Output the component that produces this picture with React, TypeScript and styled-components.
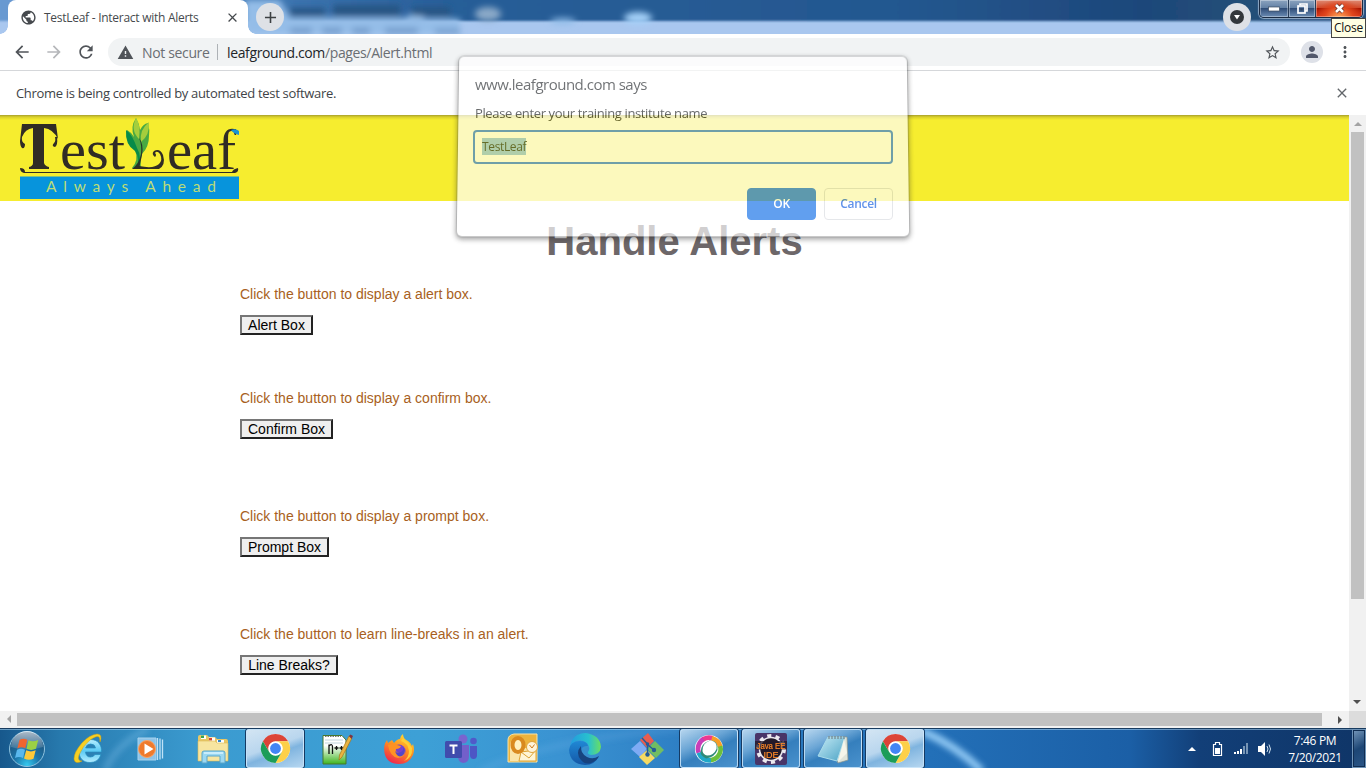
import React from 'react';
import styled, { createGlobalStyle } from 'styled-components';
import {
  MdAdd, MdArrowBack, MdArrowForward, MdClose, MdMoreVert, MdPerson,
  MdPublic, MdRefresh, MdStarBorder, MdWarning,
} from 'react-icons/md';

const ui = `'Open Sans', 'Noto Sans', sans-serif`;
const web = `'Liberation Sans', Arial, sans-serif`;

const GlobalStyle = createGlobalStyle`
  * { box-sizing: border-box; }
  body { margin: 0; overflow: hidden; background: #fff; }
  button, input { font: inherit; }
`;

const Desktop = styled.div`
  position: relative;
  width: 1366px;
  height: 768px;
  display: flex;
  flex-direction: column;
  overflow: hidden;
  font-family: ${ui};
  white-space: nowrap;
`;

/* ---------- title bar ---------- */
const TitleBar = styled.header`
  position: relative;
  height: 34px;
  flex: none;
  display: flex;
  align-items: flex-start;
  padding-left: 8px;
  background: #a9c7ef;
`;
const Glass = styled.svg`
  position: absolute;
  inset: 0;
`;
const Tab = styled.div`
  position: relative;
  width: 240px;
  height: 34px;
  display: flex;
  align-items: center;
  padding: 0 8px 0 12px;
  background: #fff;
  border-radius: 8px 8px 0 0;
  color: #45494d;
  &::before, &::after {
    content: '';
    position: absolute;
    bottom: 0;
    width: 8px;
    height: 8px;
  }
  &::before { left: -8px; background: radial-gradient(circle at 0 0, transparent 7.5px, #fff 8px); }
  &::after { right: -8px; background: radial-gradient(circle at 100% 0, transparent 7.5px, #fff 8px); }
`;
const TabTitle = styled.span`
  flex: 1;
  margin-left: 7px;
  font-size: 12px;
  letter-spacing: -0.27px;
`;
const RoundButton = styled.div`
  position: relative;
  width: 28px;
  height: 28px;
  margin: 3px 0 0 8px;
  border-radius: 50%;
  display: grid;
  place-items: center;
  background: #dee1e6;
  color: #3c4043;
`;
const Spacer = styled.div`
  flex: 1;
`;
const WindowControls = styled.div`
  position: relative;
  display: flex;
  width: 104px;
  height: 18px;
  margin: 0 3px 0 8px;
  border: 1px solid #1b2c44;
  border-top: 0;
  border-radius: 0 0 5px 5px;
  box-shadow: 0 0 1px 1px rgba(220, 235, 250, 0.6);
  overflow: hidden;
`;
const Control = styled.div<{ $w: number; $close?: boolean }>`
  width: ${p => p.$w}px;
  display: grid;
  place-items: center;
  border-right: ${p => (p.$close ? 'none' : '1px solid #263c58')};
  box-shadow: inset 0 0 0 1px rgba(255, 255, 255, 0.35);
  background: ${p => p.$close
    ? 'radial-gradient(ellipse at 50% 110%, #ffb060 0, #e0441c 45%, transparent 75%), linear-gradient(#e08a72 0, #cf4a2c 45%, #a81500 50%, #d8361a)'
    : 'linear-gradient(#8ba3bf 0, #6482a6 45%, #304e78 50%, #6c8db5)'};
`;
const Tooltip = styled.div`
  position: absolute;
  z-index: 5;
  top: 18px;
  right: 0;
  width: 35px;
  height: 20px;
  border: 1px solid #444;
  background: #ffffe3;
  color: #111;
  font-size: 12px;
  line-height: 18px;
  text-align: center;
  letter-spacing: -0.25px;
`;

/* ---------- toolbar ---------- */
const Toolbar = styled.div`
  height: 37px;
  flex: none;
  display: flex;
  align-items: center;
  padding: 0 12px;
  border-bottom: 1px solid #d5d7da;
  color: #505459;
`;
const NavIcons = styled.div`
  display: flex;
  gap: 12px;
  width: 96px;
`;
const AddressBar = styled.div`
  flex: 1;
  height: 28px;
  display: flex;
  align-items: center;
  padding: 0 9px 0 9px;
  border-radius: 14px;
  background: #f1f3f4;
  color: #6a6e73;
  font-size: 14px;
`;
const SecurityNote = styled.span`
  width: 75px;
  margin-left: 8px;
  letter-spacing: -0.35px;
`;
const Divider = styled.i`
  width: 1px;
  height: 16px;
  margin-right: 9px;
  background: #aeb2b6;
`;
const Address = styled.span`
  flex: 1;
  letter-spacing: -0.37px;
  b { font-weight: 400; color: #222529; }
`;
const Avatar = styled.div`
  width: 22px;
  height: 22px;
  margin: 0 13px 0 11px;
  border-radius: 50%;
  display: grid;
  place-items: center;
  background: #dee1e8;
  color: #52586b;
`;
const InfoBar = styled.div`
  height: 44px;
  flex: none;
  display: flex;
  align-items: center;
  justify-content: space-between;
  padding: 0 16px;
  color: #404347;
  font-size: 13px;
  letter-spacing: -0.32px;
`;

/* ---------- web page ---------- */
const Viewport = styled.div`
  height: 596px;
  flex: none;
  display: flex;
`;
const Page = styled.main`
  width: 1349px;
  font-family: ${web};
  overflow: hidden;
`;
const Banner = styled.div`
  height: 86px;
  padding-left: 20px;
  background: linear-gradient(#a79f2c 0, #d9d02b 2px, #f6ed2f 5px);
`;
const Heading = styled.h1`
  height: 48px;
  margin: 16px 0 20px;
  text-align: center;
  font-size: 40px;
  line-height: 49px;
  color: #6d6769;
`;
const Demo = styled.section<{ $height: number }>`
  height: ${p => p.$height}px;
  margin-left: 240px;
  font-size: 14px;
  color: #a85f22;
  p { margin: 0 0 12px; line-height: 18px; }
`;
const DemoButton = styled.button<{ $w: number }>`
  display: block;
  width: ${p => p.$w}px;
  height: 20px;
  padding: 0;
  border: 2px solid;
  border-color: #767676 #222 #222 #767676;
  background: #efefef;
  color: #000;
  font-size: 14px;
  line-height: 16px;
`;
const VerticalScroll = styled.div`
  width: 17px;
  display: flex;
  flex-direction: column;
  align-items: center;
  background: #f1f1f1;
`;
const HorizontalScroll = styled.div`
  height: 17px;
  flex: none;
  display: flex;
  align-items: center;
  background: #f1f1f1;
`;
const Thumb = styled.div<{ $w: number; $h: number }>`
  width: ${p => p.$w}px;
  height: ${p => p.$h}px;
  background: #c1c1c1;
`;
const Arrow = styled.div<{ $turn: number; $dim?: boolean }>`
  width: 17px;
  height: 17px;
  display: grid;
  place-items: center;
  transform: rotate(${p => p.$turn}deg);
  &::after {
    content: '';
    border: 4px solid transparent;
    border-top: 0;
    border-bottom-color: ${p => (p.$dim ? '#a3a3a3' : '#505050')};
  }
`;
const Corner = styled.div`
  width: 17px;
  height: 17px;
  background: #dcdcdc;
`;

/* ---------- prompt dialog ---------- */
const Dialog = styled.div`
  position: absolute;
  z-index: 3;
  left: 457px;
  top: 56px;
  width: 452px;
  height: 181px;
  padding: 18px 16px 16px 18px;
  opacity: 0.69;
  &::before {
    content: '';
    position: absolute;
    z-index: -1;
    inset: 0 1px 1px;
    border-radius: 5px;
    background: #fff;
    box-shadow: 0 0 0 1px rgba(60, 64, 67, 0.3), 0 2px 5px 1px rgba(40, 40, 40, 0.6);
    transform: perspective(710px) rotateX(2.5deg);
  }
`;
const DialogTitle = styled.div`
  height: 20px;
  font-size: 15px;
  line-height: 20px;
  letter-spacing: -0.5px;
  color: #303438;
`;
const DialogMessage = styled.div`
  height: 18px;
  margin-top: 10px;
  font-size: 13px;
  line-height: 18px;
  letter-spacing: -0.37px;
  color: #25282b;
`;
const Field = styled.div`
  width: 420px;
  height: 34px;
  margin: 8px 0 0 -2px;
  padding: 6px 7px;
  border: 2px solid #327de0;
  border-radius: 4px;
  font-size: 12px;
  line-height: 17px;
  letter-spacing: -0.35px;
  color: #253427;
  span { display: inline-block; height: 17px; background: #91c1e3; }
`;
const Actions = styled.div`
  display: flex;
  justify-content: flex-end;
  gap: 8px;
  margin-top: 24px;
`;
const DialogButton = styled.div<{ $primary?: boolean }>`
  width: 69px;
  height: 32px;
  border-radius: 4px;
  border: 1px solid ${p => (p.$primary ? '#1a73e8' : '#dadce0')};
  background: ${p => (p.$primary ? '#1a73e8' : 'transparent')};
  color: ${p => (p.$primary ? '#fff' : '#1a62e0')};
  font-size: 12px;
  font-weight: 600;
  line-height: 30px;
  text-align: center;
  letter-spacing: -0.3px;
`;

/* ---------- taskbar ---------- */
const TaskBar = styled.footer`
  position: relative;
  height: 40px;
  flex: none;
  display: flex;
  align-items: center;
  overflow: hidden;
  border-top: 1px solid #183b5f;
  background: linear-gradient(90deg, #17588c 0, #2779ad 60px, #3b9bd0 200px, #3da0d6 420px, #3a93d2 560px, #2c7cc2 700px, #2370b8 930px, #1b5fa6 1130px, #123f78 1200px, #0f3567 1366px);
  box-shadow: inset 0 1px 0 rgba(190, 225, 250, 0.5);
`;
const Streaks = styled.svg`
  position: absolute;
  left: 0;
  top: 0;
`;
const Slots = styled.div`
  position: relative;
  display: flex;
  gap: 4px;
`;
const StartButton = styled.div`
  width: 54px;
  margin-right: 2px;
  display: grid;
  place-items: center;
`;
const Slot = styled.div<{ $state?: 'open' | 'active' }>`
  width: 58px;
  height: 39px;
  display: grid;
  place-items: center;
  border-radius: 3px;
  ${p => p.$state && `
    border: 1px solid rgba(205, 230, 250, 0.85);
    box-shadow: 0 0 0 1px #153a63;
    background: ${p.$state === 'active'
      ? 'linear-gradient(160deg, #d3e5f3 0, #b9d6ee 45%, #7fb4df 60%, #b5d6f0)'
      : 'linear-gradient(155deg, #b5d5ee 0, #6aa5d5 35%, #357fbd 55%, #4a92cd)'};
  `}
`;
const Tray = styled.div`
  position: relative;
  display: flex;
  align-items: center;
  color: #fff;
`;
const Clock = styled.div`
  width: 72px;
  margin: 0 1px 0 0;
  font-size: 12px;
  line-height: 17px;
  letter-spacing: -0.35px;
  text-align: center;
`;
const ShowDesktop = styled.div`
  width: 14px;
  height: 39px;
  border: 1px solid #6f94b8;
  box-shadow: inset 0 0 0 1px #102d52;
  background: linear-gradient(150deg, #7597ba, #1d4675 50%, #2b5687);
`;
const IconSvg = styled.svg`
  overflow: visible;
`;

const Icon = ({ size = 32, box = 32, children }: { size?: number; box?: number; children: React.ReactNode }) => (
  <IconSvg width={size} height={size} viewBox={`0 0 ${box} ${box}`}>{children}</IconSvg>
);

const ChromeIcon = () => (
  <Icon size={31}>
    <circle cx="16" cy="16" r="15" fill="#fff" />
    <path d="M3 8.5A15 15 0 0 1 29 8.5H16A7.5 7.5 0 0 0 9.5 19.7Z" fill="#dc4437" />
    <path d="M29 8.5A15 15 0 0 1 16 31L22.5 19.7A7.5 7.5 0 0 0 16 8.5Z" fill="#fdd049" />
    <path d="M3 8.5A15 15 0 0 0 16 31L22.5 19.7A7.5 7.5 0 0 1 9.5 19.7Z" fill="#1c9d58" />
    <circle cx="16" cy="16" r="7" fill="#fff" />
    <circle cx="16" cy="16" r="5.6" fill="#4385f4" />
  </Icon>
);

const StartIcon = () => (
  <Icon size={38} box={38}>
    <defs>
      <radialGradient id="orb" cx=".5" cy=".95" r=".9">
        <stop offset="0" stopColor="#35c8ee" /><stop offset=".4" stopColor="#1b76aa" /><stop offset="1" stopColor="#204a70" />
      </radialGradient>
      <linearGradient id="orbShine" x2="0" y2="1">
        <stop offset="0" stopColor="#fff" stopOpacity=".65" /><stop offset="1" stopColor="#fff" stopOpacity=".1" />
      </linearGradient>
    </defs>
    <circle cx="19" cy="19" r="17.5" fill="url(#orb)" stroke="#8fc3df" />
    <path d="M3 17A16 16 0 0 1 35 17Q19 22 3 17Z" fill="url(#orbShine)" />
    <path d="M11.5 10Q15 7.500 19.300 9.700L17.300 18.300Q13.400 16.300 9.300 18.400Z" fill="#ef6530" />
    <path d="M20.500 10.300Q25 12.500 30.200 10L28 18.800Q23 21 18.500 18.800Z" fill="#9bd044" />
    <path d="M9 19.800Q13 17.800 17 19.800L15 28Q11 26 7 28Z" fill="#5ab8ed" />
    <path d="M18.200 20.300Q23 22.500 27.700 20.300L25.500 28.700Q21 31 16 28.600Z" fill="#fdc93a" />
  </Icon>
);

const ExplorerEIcon = () => (
  <Icon>
    <defs><linearGradient id="ie" x2="0" y2="1"><stop offset="0" stopColor="#b8efff" /><stop offset=".5" stopColor="#5acaf5" /><stop offset="1" stopColor="#b4edff" /></linearGradient></defs>
    <path d="M28.500 19H12.500Q13 24 17.500 24Q20.500 24 22 21.500H28Q25.500 29.500 17 29.500C9.500 29.500 6 24.500 6 18.500C6 11.500 10.500 6.500 17.500 6.500C25 6.500 29 12 28.500 19ZM22.500 15Q22 11 17.600 11Q13.500 11 12.600 15Z" fill="url(#ie)" stroke="#258ebf" strokeWidth=".7" />
    <path d="M27 9Q30 1 24 1Q16 2 9 10Q1 19 1 26Q2 32 9 28Q4 28 6 22Q9 14 17 7Q24 2 26 4Q27 5 27 9Z" fill="#f7cf22" stroke="#d6a20c" strokeWidth=".5" />
  </Icon>
);

const MediaIcon = () => (
  <Icon>
    <path d="M3 5H21V27H3Z" fill="#8dc3e8" stroke="#a8d3ee" />
    <path d="M22.500 5V27M25 5.500V26.500M27.500 6.500V25.500" stroke="#c0e2f7" strokeWidth="1.300" />
    <circle cx="12" cy="16" r="8.500" fill="#ef7a2c" stroke="#f8a467" />
    <path d="M9.500 10.500L18.500 16L9.500 21.500Z" fill="#fff" />
  </Icon>
);

const FolderIcon = () => (
  <Icon>
    <path d="M1 4Q1 2 3 2H10L12 4H18L20 6H29Q31 6 31 8V28H1Z" fill="#e8c765" />
    <path d="M4 2.500H9V6H4ZM12 4.500H18V8H12ZM20 7H27V10H20Z" fill="#fff" />
    <path d="M4 2.500H7V5H4Z" fill="#38a451" /><path d="M12 5H15V7.500H12Z" fill="#d84435" /><path d="M21 7H24V9H21Z" fill="#3187c8" />
    <path d="M1 8H18L20 10H31V28H1Z" fill="#f7e5a0" stroke="#dbb856" strokeWidth=".6" />
    <path d="M5 30V20Q5 18 7 18H26Q28 18 28 20V30H23V23H10V30Z" fill="#9bd8f2" stroke="#5aa6ca" />
    <path d="M7 20H26" stroke="#d9f5ff" strokeWidth="1.500" />
  </Icon>
);

const NotepadPlusIcon = () => (
  <Icon>
    <defs><linearGradient id="npp" x2="0" y2="1"><stop offset=".35" stopColor="#fff" /><stop offset="1" stopColor="#3eb51f" /></linearGradient></defs>
    <path d="M2 2.500H21L25 7V31H2Z" fill="url(#npp)" stroke="#48782f" />
    <path d="M4 3.500H20" stroke="#777" strokeDasharray="1.500 1" />
    <path d="M4 7H22M4 10H22" stroke="#c1d4dd" />
    <path d="M8 21V11.500M8 13Q11.500 10 11.500 14V21M13.500 15H17.500M15.500 13V17M18.500 15H22.500M20.500 13V17" fill="none" stroke="#111" strokeWidth="1.300" />
    <path d="M28 3L31 5L21 24L18 27L18.500 22Z" fill="#eab340" stroke="#a8741b" strokeWidth=".7" />
    <path d="M28 3L29.500 1.500L32 3L30.500 6Z" fill="#7d3541" />
  </Icon>
);

const FirefoxIcon = () => (
  <Icon>
    <defs><linearGradient id="ff" x1=".8" y1="0" x2=".3" y2="1"><stop offset="0" stopColor="#ffe335" /><stop offset=".5" stopColor="#ff8a20" /><stop offset="1" stopColor="#ef2650" /></linearGradient></defs>
    <path d="M20 1Q20 6 25 8Q28 10 29 13L30 11Q32 17 30 22Q26 31 16 31Q4 31 1.500 20Q0 12 4 7L5 10L9 7L11 10Q14 6 17 6Q17 3 20 1Z" fill="url(#ff)" />
    <circle cx="16" cy="18" r="6.500" fill="#7542d0" />
    <path d="M5 12Q10 10 14 12L18 13Q17 16 13 16Q12 19 16 20Q20 21 22 18Q22 25 15 25Q7 24 5 12Z" fill="#ff9224" />
    <path d="M12 18Q14 21 18 19Q21 17 20 14Q24 20 19 23Q14 25 12 18Z" fill="#5546c8" />
    <path d="M18 8Q25 10 26 18Q26 24 21 28Q30 25 29 15Q25 9 20 5Z" fill="#ffce35" />
  </Icon>
);

const TeamsIcon = () => (
  <Icon>
    <circle cx="18" cy="6" r="4.500" fill="#7a65cf" /><circle cx="28.500" cy="8" r="3.300" fill="#5059c9" />
    <path d="M13 12H24V23Q24 30 18 30Q13 29 13 23Z" fill="#735fca" />
    <path d="M25 13H32V22Q32 26 28.500 26Q25 26 25 22Z" fill="#4d56c5" />
    <rect y="8" width="17" height="17" rx="1.500" fill="#414cad" />
    <path d="M4.500 12.500H12.500M8.500 12.500V21" stroke="#fff" strokeWidth="2" />
  </Icon>
);

const OutlookIcon = () => (
  <Icon>
    <path d="M7 1H30V29H1V7Q1 2 7 1Z" fill="#edb33d" stroke="#f9e3a6" />
    <path d="M5 15H29V28H3V8Z" fill="#fae4a9" />
    <path d="M14 19L29 17V28H12Z" fill="#fff5d5" stroke="#dca234" /><path d="M14 19L22 25L29 17" fill="none" stroke="#dca234" />
    <ellipse cx="11" cy="12" rx="5.500" ry="7" fill="#fff0c0" stroke="#d9891f" strokeWidth="4" />
    <circle cx="25" cy="14" r="5.500" fill="#fff4da" stroke="#dfa43c" /><path d="M22.500 12L25 15L27.500 11.500" fill="none" stroke="#cf7a1c" />
  </Icon>
);

const EdgeIcon = () => (
  <Icon>
    <defs>
      <linearGradient id="edgeTop"><stop offset="0" stopColor="#239bdf" /><stop offset=".6" stopColor="#28c1ce" /><stop offset="1" stopColor="#6ade62" /></linearGradient>
      <linearGradient id="edgeLow" x2="0" y2="1"><stop offset="0" stopColor="#2088d5" /><stop offset="1" stopColor="#1457a6" /></linearGradient>
    </defs>
    <path d="M1 14Q3 0 17 0Q31 2 32 14Q31 22 22 22Q18 21 19 19Q22 15 18 10Q8 3 1 14Z" fill="url(#edgeTop)" />
    <path d="M0 17Q1 8 11 8Q18 8 19 13Q12 12 12 19Q14 27 24 26Q28 26 30 23Q26 32 16 32Q1 31 0 17Z" fill="url(#edgeLow)" />
    <path d="M12 13Q6 20 12 27Q16 32 22 30Q28 28 30 23Q24 27 18 24Q11 20 12 13Z" fill="#17437f" />
  </Icon>
);

const GitIcon = () => (
  <Icon>
    <path d="M9 7L17 0L23 8L16 15Z" fill="#e85d50" /><path d="M0 16L9 8L16 16L9 24Z" fill="#7eabf4" />
    <path d="M16 16L24 8L33 17L25 25Z" fill="#71bd63" /><path d="M8 24L16 17L24 25L16 32Z" fill="#f4d963" />
    <path d="M11 5L16.500 11V22M17 12L23 17" fill="none" stroke="#235c98" strokeWidth="1.500" />
    <circle cx="16.500" cy="21.500" r="2.200" fill="#235c98" /><circle cx="23" cy="17" r="2.200" fill="#235c98" /><circle cx="16.500" cy="11" r="1.800" fill="#235c98" />
  </Icon>
);

const WebexIcon = () => (
  <Icon size={30}>
    <circle cx="16" cy="16" r="15" fill="#fff" />
    <g fill="none" strokeWidth="5">
      <path d="M5 20A12 12 0 0 1 11 5" stroke="#c83db8" /><path d="M10 5.500A12 12 0 0 1 20 4.500" stroke="#ec3b90" />
      <path d="M19 4.500A12 12 0 0 1 28 14" stroke="#f79d27" /><path d="M28 13A12 12 0 0 1 17 28" stroke="#6bbf3c" />
      <path d="M18 28A12 12 0 0 1 5 20" stroke="#1fa8c9" />
    </g>
    <path d="M7 20Q7 10 17 7Q26 7 25 17Q22 25 13 26Q8 24 7 20Z" fill="#2f8a78" />
    <path d="M9 18Q9 9 18 7Q25 8 24 16Q21 23 14 23Q10 22 9 18Z" fill="#fff" />
  </Icon>
);

const JavaIcon = () => (
  <Icon>
    <rect width="32" height="32" rx="2" fill="#493568" />
    <circle cx="16" cy="16" r="13" fill="none" stroke="#ece9ef" strokeWidth="4" strokeDasharray="4 4.168" />
    <circle cx="16" cy="16" r="11.500" fill="#241b2a" stroke="#ece9ef" strokeWidth="1.500" />
    <rect y="8" width="32" height="8.500" fill="#241b2a" opacity=".75" />
    <g fill="#ff8a28" stroke="#ff8a28" strokeWidth=".2" fontFamily="Liberation Sans, sans-serif" fontSize="9" textAnchor="middle">
      <text x="16" y="16" textLength="29" lengthAdjust="spacingAndGlyphs">Java EE</text><text x="16" y="25">IDE</text>
    </g>
  </Icon>
);

const NotepadIcon = () => (
  <Icon>
    <defs><linearGradient id="note" x2="1" y2="1"><stop offset="0" stopColor="#c5eaf5" /><stop offset="1" stopColor="#4ba3c5" /></linearGradient></defs>
    <path d="M11 4L30 4L31 27L21 30Z" fill="#dfe4da" stroke="#8b958c" strokeWidth=".7" />
    <path d="M11 4H28L20 28L1 23Z" fill="url(#note)" stroke="#a9dbea" />
    <path d="M27 6L30 20L21 29Z" fill="#f5f5ea" />
    <path d="M12 3V6M15 3V6M18 3V6M21 3V6M24 3V6M27 3V6" stroke="#6d777b" />
  </Icon>
);

const Logo = () => (
  <svg width="219" height="86" viewBox="0 0 219 86">
    <g fill="#302c25" fontFamily="'Liberation Serif', serif">
      <path d="M2 9H36L38 24Q33 14 24 13V48Q25 51 29 52V54H9V52Q13 51 13 48V13Q5 14 2 22Q1 27 5 29Q5 34 2 33Q0 31 0 26Z" />
      <path d="M37 22Q38 30 35 32Q31 31 34 28Q36 26 35 22Z" />
      <text x="40" y="53.500" fontSize="56" textLength="65" lengthAdjust="spacingAndGlyphs">est</text>
      <text x="147" y="53.500" fontSize="56" textLength="69" lengthAdjust="spacingAndGlyphs">eaf</text>
    </g>
    <path d="M112 53Q119 45 115 35Q105 28 107 15Q111 17 114 22Q110 12 116 3Q119 8 120 15Q123 9 128 8Q130 15 129 21Q129 32 122 39Q120 45 121 53Z" fill="#49a942" />
    <path d="M106 15Q112 19 117 33Q123 43 117 54Q120 43 115 36Q105 30 106 15Z" fill="#078b49" />
    <path d="M116 3Q121 10 119 24Q110 15 116 3ZM129 7Q130 20 121 27Q119 15 129 7Z" fill="#a5ce3c" />
    <path d="M119 23Q124 29 122 40L119 54H112Q119 49 121 39Q122 30 119 23Z" fill="#273329" />
    <path d="M119 51Q134 54 139 49Q143 45 140 39Q137 35 135 38Q137 40 135 42Q131 39 134 36Q140 33 143 40Q146 50 139 54H112Z" fill="#302c25" />
    <path d="M0 53Q5 53 5 57H212Q213 54 218 53Q219 57 215 58H4Q0 57 0 53Z" fill="#302c25" />
    <path d="M211 15Q216 13 219 16V20Q214 19 211 15Z" fill="#1693d3" />
    <rect y="61.500" width="219" height="22.500" fill="#0794dc" />
    <text x="26" y="77" fontSize="15.500" fontFamily="Lato, sans-serif" fill="#bddc77" textLength="170">Always Ahead</text>
  </svg>
);

const demos = [
  { text: 'Click the button to display a alert box.', label: 'Alert Box', width: 73, height: 104 },
  { text: 'Click the button to display a confirm box.', label: 'Confirm Box', width: 93, height: 118 },
  { text: 'Click the button to display a prompt box.', label: 'Prompt Box', width: 89, height: 118 },
  { text: 'Click the button to learn line-breaks in an alert.', label: 'Line Breaks?', width: 98, height: 60 },
];

const tasks: { icon: React.ComponentType; state?: 'open' | 'active' }[] = [
  { icon: ExplorerEIcon }, { icon: MediaIcon }, { icon: FolderIcon },
  { icon: ChromeIcon, state: 'active' },
  { icon: NotepadPlusIcon }, { icon: FirefoxIcon }, { icon: TeamsIcon },
  { icon: OutlookIcon }, { icon: EdgeIcon }, { icon: GitIcon },
  { icon: WebexIcon, state: 'open' }, { icon: JavaIcon, state: 'open' },
  { icon: NotepadIcon, state: 'open' }, { icon: ChromeIcon, state: 'active' },
];

export default function App() {
  return (
    <Desktop>
      <GlobalStyle />
      <TitleBar>
        <Glass width="1366" height="34">
          <defs>
            <linearGradient id="sky"><stop offset="0" stopColor="#6a9bd3" /><stop offset=".2" stopColor="#3f77b3" /><stop offset=".33" stopColor="#285e98" /><stop offset=".65" stopColor="#245890" /><stop offset=".83" stopColor="#1e477a" /><stop offset=".9" stopColor="#234f78" /><stop offset="1" stopColor="#284d7c" /></linearGradient>
            <filter id="soft" x="-20%" y="-50%" width="140%" height="200%"><feGaussianBlur stdDeviation="3" /></filter>
            <filter id="edge" x="-2%" width="104%" y="-30%" height="160%"><feGaussianBlur stdDeviation="1" /></filter>
          </defs>
          <rect x="-10" y="-8" width="1390" height="29" fill="url(#sky)" filter="url(#edge)" />
          <g filter="url(#soft)">
            <path d="M245 0H280L290 18H405L418 10L425 19H460V34H245Z" fill="#94bde8" />
            <path d="M290 8H325V16H290ZM333 5H400V16H333ZM412 7H450V16H412Z" fill="#285483" />
            <path d="M290 28H312V34H290ZM322 28H342V34H322ZM352 28H370V34H352ZM385 28H418V34H385ZM435 29H460V34H435Z" fill="#6f9aca" />
            <ellipse cx="488" cy="14" rx="13" ry="7" fill="#8aa9c8" />
            <ellipse cx="563" cy="21" rx="13" ry="3" fill="#8ebbe7" />
            <ellipse cx="638" cy="18" rx="14" ry="6" fill="#a5d1f9" />
          </g>
        </Glass>
        <Tab>
          <MdPublic size={17} />
          <TabTitle>TestLeaf - Interact with Alerts</TabTitle>
          <MdClose size={15} />
        </Tab>
        <RoundButton><MdAdd size={19} /></RoundButton>
        <Spacer />
        <RoundButton>
          <svg width="14" height="14"><circle cx="7" cy="7" r="7" fill="#33373b" /><path d="M4 5H10L7 9.500Z" fill="#fff" /></svg>
        </RoundButton>
        <WindowControls>
          <Control $w={29}><svg width="12" height="6"><rect x=".5" y="1" width="11" height="4" fill="#fff" stroke="#3b4a60" strokeWidth=".7" /></svg></Control>
          <Control $w={27}><svg width="13" height="13"><g fill="none" stroke="#fff" strokeWidth="1.700"><path d="M4 3V2H11V9H9" /><rect x="2" y="4" width="7" height="7" /></g><rect x="4.500" y="6.500" width="2" height="2" fill="#304561" /></svg></Control>
          <Control $w={46} $close><svg width="13" height="11"><path d="M3 2L10 9M10 2L3 9" stroke="#5f2a25" strokeWidth="4" /><path d="M3 2L10 9M10 2L3 9" stroke="#fff" strokeWidth="2.600" /></svg></Control>
        </WindowControls>
      </TitleBar>
      <Tooltip>Close</Tooltip>
      <Toolbar>
        <NavIcons>
          <MdArrowBack size={20} /><MdArrowForward size={20} color="#b5b7ba" /><MdRefresh size={20} />
        </NavIcons>
        <AddressBar>
          <MdWarning size={17} color="#505459" />
          <SecurityNote>Not secure</SecurityNote>
          <Divider />
          <Address><b>leafground.com</b>/pages/Alert.html</Address>
          <MdStarBorder size={17} color="#505459" />
        </AddressBar>
        <Avatar><MdPerson size={18} /></Avatar>
        <MdMoreVert size={18} />
      </Toolbar>
      <InfoBar>
        Chrome is being controlled by automated test software.
        <MdClose size={16} color="#63676b" />
      </InfoBar>

      <Viewport>
        <Page>
          <Banner><Logo /></Banner>
          <Heading>Handle Alerts</Heading>
          {demos.map(d => (
            <Demo key={d.label} $height={d.height}>
              <p>{d.text}</p>
              <DemoButton $w={d.width}>{d.label}</DemoButton>
            </Demo>
          ))}
        </Page>
        <VerticalScroll>
          <Arrow $turn={0} $dim />
          <Thumb $w={13} $h={467} />
          <Spacer />
          <Arrow $turn={180} />
        </VerticalScroll>
      </Viewport>
      <HorizontalScroll>
        <Arrow $turn={-90} $dim />
        <Thumb $w={1305} $h={13} />
        <Spacer />
        <Arrow $turn={90} />
        <Corner />
      </HorizontalScroll>

      <TaskBar>
        <Streaks width="1366" height="39">
          <defs><filter id="glow" x="-30%" y="-50%" width="160%" height="200%"><feGaussianBlur stdDeviation="3" /></filter></defs>
          <g filter="url(#glow)" fill="none" stroke="#9bd1fa">
            <path d="M922 2Q955 16 982 42" strokeWidth="7" />
            <path d="M105 42Q115 16 148 0" strokeWidth="5" opacity=".35" />
            <path d="M480 42Q550 10 680 0" strokeWidth="6" opacity=".15" />
          </g>
        </Streaks>
        <Slots>
          <StartButton><StartIcon /></StartButton>
          {tasks.map(({ icon: TaskIcon, state }, i) => (
            <Slot key={i} $state={state}><TaskIcon /></Slot>
          ))}
        </Slots>
        <Spacer />
        <Tray>
          <svg width="94" height="20" viewBox="1185 0 94 20">
            <path d="M1188 12L1192 8L1196 12Z" fill="#fff" />
            <path d="M1215.500 3.500H1219.500V5.500H1221.500V16.500H1213.500V5.500H1215.500Z" fill="none" stroke="#fff" strokeWidth="1.200" /><rect x="1215" y="9" width="5" height="6" fill="#fff" />
            <path d="M1235 13V15M1238 12V15M1241 10V15" stroke="#fff" strokeWidth="2" /><path d="M1244 7V15M1247 4V15" stroke="#7795b5" strokeWidth="2" />
            <path d="M1258 7H1261L1265 3V17L1261 13H1258Z" fill="#fff" /><path d="M1267 7Q1269 10 1267 13M1269 5.500Q1272 10 1269 14.500" fill="none" stroke="#d0e1ef" />
          </svg>
          <Clock>7:46 PM<br />7/20/2021</Clock>
          <ShowDesktop />
        </Tray>
      </TaskBar>

      <Dialog>
        <DialogTitle>www.leafground.com says</DialogTitle>
        <DialogMessage>Please enter your training institute name</DialogMessage>
        <Field><span>TestLeaf</span></Field>
        <Actions>
          <DialogButton $primary>OK</DialogButton>
          <DialogButton>Cancel</DialogButton>
        </Actions>
      </Dialog>
    </Desktop>
  );
}
